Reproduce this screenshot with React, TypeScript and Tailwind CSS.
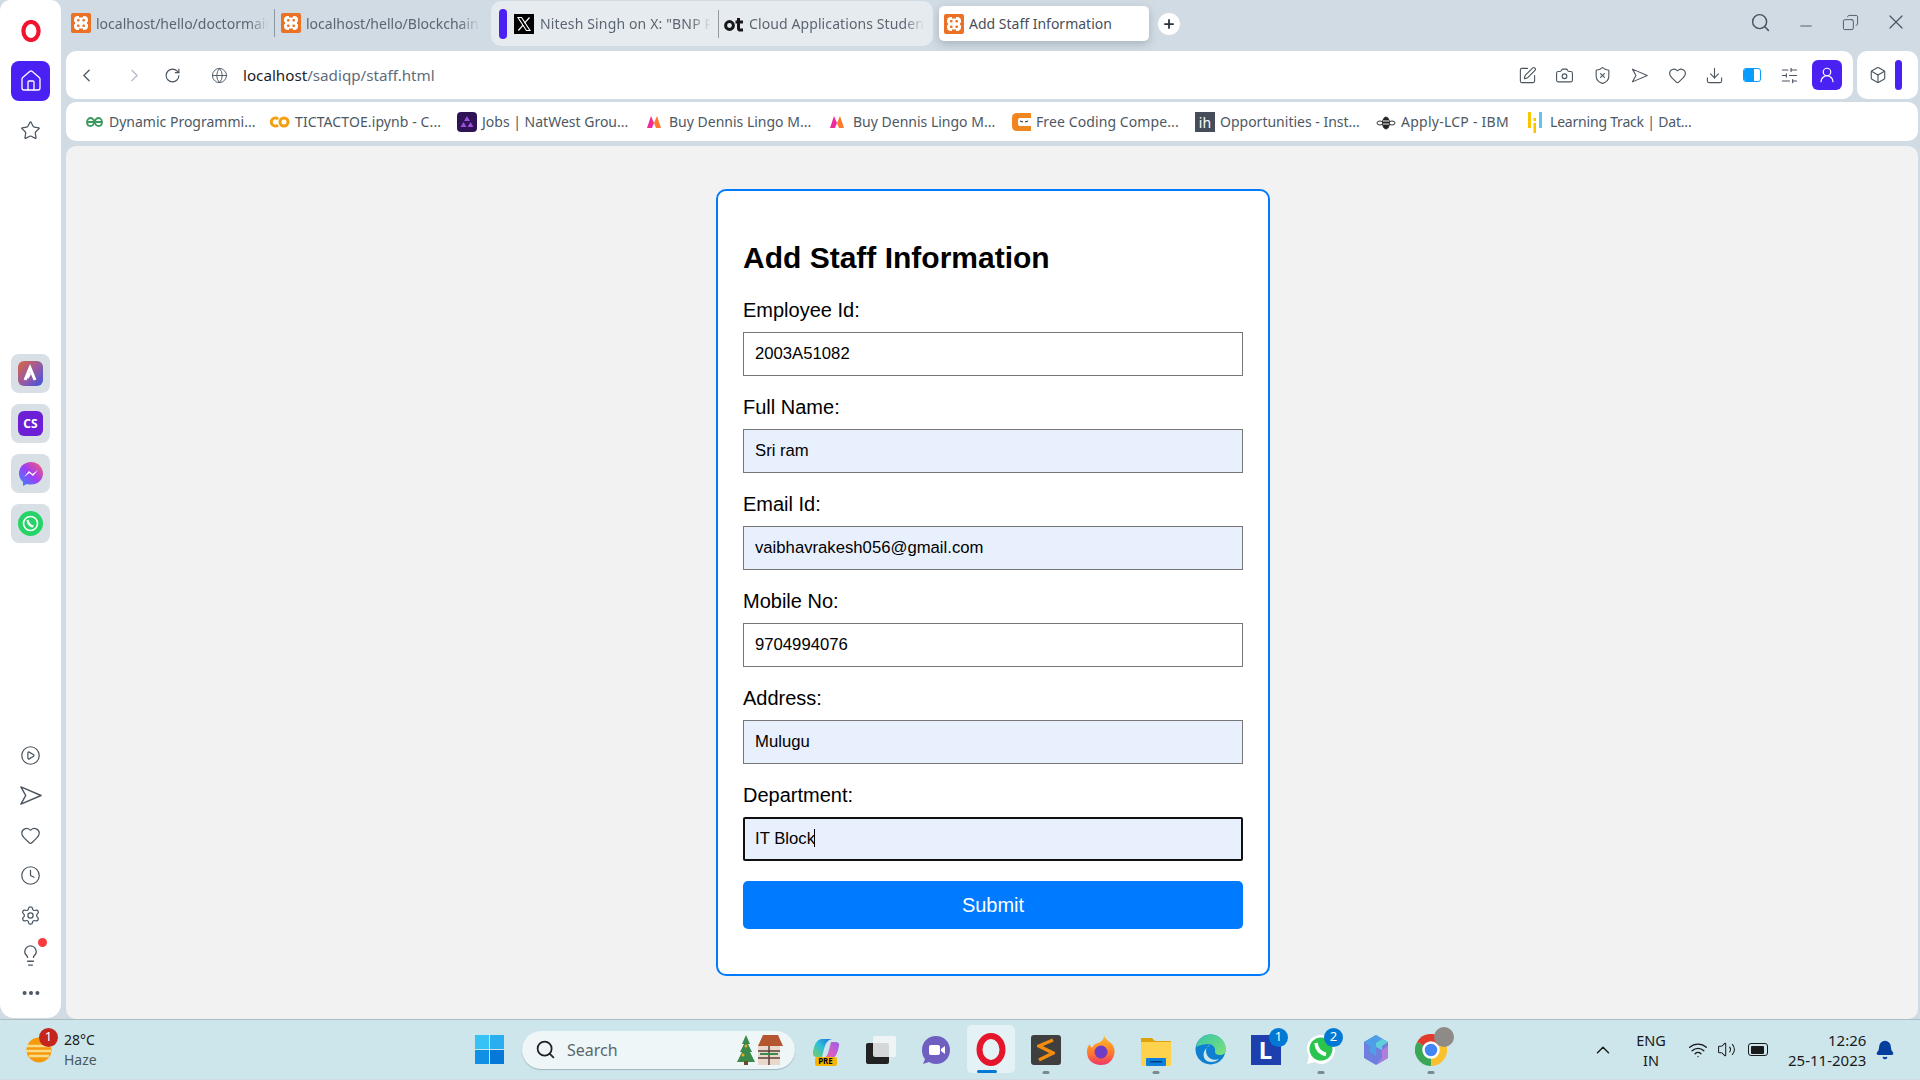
import {
  Bell,
  Box,
  Camera,
  ChevronLeft,
  ChevronRight,
  ChevronUp,
  CirclePlay,
  Clock,
  Copy,
  Download,
  Globe,
  Heart,
  House,
  Lightbulb,
  Minus,
  MoreHorizontal,
  Plus,
  RotateCw,
  Search,
  Settings,
  ShieldX,
  SlidersHorizontal,
  SquarePen,
  Star,
  UserRound,
  Volume2,
  Wifi,
  X,
} from "lucide-react";

function SendIcon({ size = 22 }: { size?: number }) {
  return (
    <svg width={size} height={size} viewBox="0 0 24 24" fill="none" stroke="#4a5560" strokeWidth="1.5" strokeLinejoin="round">
      <path d="M2 3 L23 12 L2 21 L7 12 Z" />
    </svg>
  );
}

function OperaLogo({ size = 20 }: { size?: number }) {
  return (
    <svg width={size} height={size * 1.1} viewBox="0 0 20 22">
      <ellipse cx="10" cy="11" rx="7.6" ry="9" fill="none" stroke="#f0142f" strokeWidth="4.2" />
    </svg>
  );
}

function Xampp() {
  return (
    <svg width="20" height="20" viewBox="0 0 20 20" className="shrink-0">
      <rect width="20" height="20" rx="2" fill="#ea7125" />
      <rect x="3" y="3" width="14" height="14" rx="4" fill="#fff" />
      <rect x="8" y="2.500" width="4" height="2" fill="#ea7125" />
      <rect x="8" y="15.500" width="4" height="2" fill="#ea7125" />
      <rect x="2.500" y="8.800" width="1.500" height="2.400" fill="#ea7125" />
      <rect x="16" y="8.800" width="1.500" height="2.400" fill="#ea7125" />
      <rect x="6" y="6" width="2.600" height="2.600" rx="1" fill="#ea7125" />
      <rect x="11.400" y="6" width="2.600" height="2.600" rx="1" fill="#ea7125" />
      <rect x="6" y="11.400" width="2.600" height="2.600" rx="1" fill="#ea7125" />
      <rect x="11.400" y="11.400" width="2.600" height="2.600" rx="1" fill="#ea7125" />
    </svg>
  );
}

function XLogo() {
  return (
    <svg width="20" height="20" viewBox="0 0 20 20" className="shrink-0">
      <rect width="20" height="20" fill="#000" />
      <path d="M4 3.500h3.600l8.400 13h-3.600z" fill="none" stroke="#fff" strokeWidth="1.100" />
      <path d="M15.500 3.500l-5 5.600M9 11.200l-4.600 5.300" stroke="#fff" strokeWidth="1.200" />
    </svg>
  );
}

function OtLogo() {
  return (
    <svg width="20" height="16" viewBox="0 0 20 16" className="shrink-0">
      <circle cx="5.500" cy="9.500" r="3.900" fill="none" stroke="#15161a" strokeWidth="3" />
      <path d="M14.500 2v10.500q0 1.600 2 1.600H19M11.500 6H19" fill="none" stroke="#15161a" strokeWidth="3" />
    </svg>
  );
}

function TabStrip() {
  return (
    <div className="flex h-[51px] items-start">
      <div className="mt-[8px] ml-[5px] flex h-[30px] items-center">
        <Xampp />
        <span className="ml-[5px] w-[173px] overflow-hidden whitespace-nowrap text-[14px] text-[#5b6671] [mask-image:linear-gradient(to_right,black_88%,transparent)]">
          localhost/hello/doctormain
        </span>
        <div className="ml-[5px] mr-[6px] h-[28px] w-px bg-[#8d98a3]" />
        <Xampp />
        <span className="ml-[5px] w-[174px] overflow-hidden whitespace-nowrap text-[14px] text-[#5b6671] [mask-image:linear-gradient(to_right,black_88%,transparent)]">
          localhost/hello/Blockchain
        </span>
      </div>
      <div className="mt-px ml-[11px] flex h-[45px] w-[442px] shrink-0 items-center rounded-[10px] bg-[#e6ebf0] pl-[8px]">
        <div className="h-[30px] w-[8px] shrink-0 rounded-full bg-[#4b21f3]" />
        <div className="ml-[7px] flex shrink-0 items-center">
          <XLogo />
        </div>
        <span className="ml-[6px] w-[171px] shrink-0 overflow-hidden whitespace-nowrap text-[14px] tracking-[0.15px] text-[#5b6671] [mask-image:linear-gradient(to_right,black_88%,transparent)]">
          Nitesh Singh on X: "BNP Paribas
        </span>
        <div className="ml-[7px] mr-[5px] h-[28px] w-px shrink-0 bg-[#8d98a3]" />
        <OtLogo />
        <span className="ml-[5px] w-[176px] shrink-0 overflow-hidden whitespace-nowrap text-[14px] tracking-[0.1px] text-[#5b6671] [mask-image:linear-gradient(to_right,black_88%,transparent)]">
          Cloud Applications Student
        </span>
      </div>
      <div className="mt-[6px] ml-[6px] flex h-[35px] w-[210px] shrink-0 items-center gap-[5px] rounded-[5px] bg-white pl-[5px] shadow-[0_3px_8px_rgba(90,105,120,0.35)]">
        <Xampp />
        <span className="text-[14px] whitespace-nowrap text-[#46505b]">Add Staff Information</span>
      </div>
      <div className="mt-[13px] ml-[9px] flex h-[22px] w-[22px] shrink-0 items-center justify-center rounded-full bg-white">
        <Plus size={14} strokeWidth={3} color="#25303b" />
      </div>
      <div className="mt-[9px] ml-auto flex items-center text-[#4a5560]">
        <div className="flex w-[45px] justify-center">
          <Search size={21} strokeWidth={1.7} />
        </div>
        <div className="flex w-[45px] justify-center pt-[8px]">
          <Minus size={18} strokeWidth={1.2} />
        </div>
        <div className="flex w-[45px] justify-center">
          <Copy size={17} strokeWidth={1.3} className="-scale-x-100" />
        </div>
        <div className="flex w-[45px] justify-center">
          <X size={24} strokeWidth={1.2} />
        </div>
      </div>
    </div>
  );
}

function AddressBar() {
  const icons = [
    <SquarePen key="pen" size={19} strokeWidth={1.4} />,
    <Camera key="cam" size={19} strokeWidth={1.4} />,
    <ShieldX key="shield" size={19} strokeWidth={1.4} />,
    <SendIcon key="send" size={17} />,
    <Heart key="heart" size={19} strokeWidth={1.4} />,
    <Download key="dl" size={19} strokeWidth={1.4} />,
    <div key="batt" className="flex h-[14px] w-[18px] overflow-hidden rounded-[3px] border border-[#0a9bff]">
      <div className="w-[10px] bg-[#0a9bff]" />
    </div>,
    <SlidersHorizontal key="sl" size={19} strokeWidth={1.4} />,
  ];
  return (
    <div className="flex h-[48px] gap-[4px]">
      <div className="flex w-[1787px] items-center rounded-[10px] bg-white pl-[10px] text-[#4a5560]">
        <ChevronLeft size={21} strokeWidth={1.5} />
        <ChevronRight size={21} strokeWidth={1.5} className="ml-[27px] text-[#b5bdc5]" />
        <RotateCw size={17} strokeWidth={1.6} className="ml-[19px]" />
        <Globe size={17} strokeWidth={1.3} className="ml-[30px]" />
        <span className="ml-[15px] text-[15.2px] whitespace-nowrap">
          <span className="text-[#1d2329]">localhost</span>
          <span className="text-[#5f6c7b]">/sadiqp/staff.html</span>
        </span>
        <div className="ml-auto flex items-center">
          {icons.map((icon, i) => (
            <div key={i} className="flex w-[37.4px] justify-center">
              {icon}
            </div>
          ))}
          <div className="mr-[11px] ml-[4px] flex h-[30px] w-[30px] items-center justify-center rounded-[6px] bg-[#4b21f3]">
            <UserRound size={18} strokeWidth={1.6} color="#fff" />
          </div>
        </div>
      </div>
      <div className="flex w-[61px] items-center rounded-[10px] bg-white pl-[12px] text-[#4a5560]">
        <Box size={18} strokeWidth={1.5} />
        <div className="ml-[8px] h-[30px] w-[7px] rounded-full bg-[#4b21f3]" />
      </div>
    </div>
  );
}

const bookmarks = [
  {
    title: "Dynamic Programmi...",
    width: "w-[145px]",
    icon: (
      <svg width="17" height="12" viewBox="0 0 17 12" fill="none" stroke="#3c9a5f" strokeWidth="1.800">
        <path d="M1 6h15M8.500 6c-1-3-2.500-4-4-4S1 3.500 1 6s1.500 4 3.500 4 3-1 4-4zm0 0c1-3 2.500-4 4-4S16 3.500 16 6s-1.500 4-3.500 4-3-1-4-4z" />
      </svg>
    ),
  },
  {
    title: "TICTACTOE.ipynb - C...",
    width: "w-[147px]",
    icon: (
      <svg width="20" height="12" viewBox="0 0 20 12" fill="none" stroke="#f59e0b" strokeWidth="3">
        <path d="M8 3a4 4 0 1 0 0 6" />
        <circle cx="14" cy="6" r="4" />
      </svg>
    ),
  },
  {
    title: "Jobs | NatWest Grou...",
    width: "w-[146px]",
    icon: (
      <svg width="20" height="20" viewBox="0 0 20 20">
        <rect width="20" height="20" rx="4" fill="#2e1457" />
        <path d="M10 4l3 5H7zM6.500 10l3 5h-6zM13.500 10l3 5h-6z" fill="#9b51d8" />
      </svg>
    ),
  },
  {
    title: "Buy Dennis Lingo M...",
    width: "w-[143px]",
    icon: (
      <svg width="16" height="13" viewBox="0 0 16 13">
        <path d="M1 13L5 1l3 7-2 5z" fill="#ee2a9c" />
        <path d="M8 8l3-7 4 12h-5z" fill="#ff7a2e" />
      </svg>
    ),
  },
  {
    title: "Buy Dennis Lingo M...",
    width: "w-[143px]",
    icon: (
      <svg width="16" height="13" viewBox="0 0 16 13">
        <path d="M1 13L5 1l3 7-2 5z" fill="#ee2a9c" />
        <path d="M8 8l3-7 4 12h-5z" fill="#ff7a2e" />
      </svg>
    ),
  },
  {
    title: "Free Coding Compe...",
    width: "w-[143px]",
    icon: (
      <svg width="20" height="20" viewBox="0 0 20 20">
        <path d="M6 1h14v5H9q-2 0-2 2v4q0 2 2 2h11v5H6q-5 0-5-5V6q0-5 5-5z" fill="#f0861f" />
        <path d="M9 9l3 1M14 10l3-1" stroke="#333" strokeWidth="1.200" />
      </svg>
    ),
  },
  {
    title: "Opportunities - Inst...",
    width: "w-[140px]",
    icon: (
      <div className="flex h-[20px] w-[20px] items-end justify-center bg-[#454c5a] text-[14px] leading-[18px] text-white">ih</div>
    ),
  },
  {
    title: "Apply-LCP - IBM",
    width: "w-[109px]",
    icon: (
      <svg width="20" height="16" viewBox="0 0 20 16" fill="none" stroke="#333" strokeWidth="1">
        <ellipse cx="4" cy="9" rx="3" ry="2" />
        <ellipse cx="16" cy="9" rx="3" ry="2" />
        <ellipse cx="10" cy="9" rx="3.500" ry="6" fill="#222" />
        <path d="M7 7h6M7 10h6" stroke="#fff" />
      </svg>
    ),
  },
  {
    title: "Learning Track | Dat...",
    width: "w-[141px]",
    icon: (
      <svg width="14" height="24" viewBox="0 0 14 24">
        <rect x="0" y="2" width="3" height="16" fill="#fbc400" />
        <rect x="5.500" y="8" width="2.500" height="3" fill="#fbc400" />
        <rect x="5.500" y="13" width="2.500" height="10" fill="#fbc400" />
        <rect x="11" y="2" width="3" height="16" fill="#5fc4ee" />
      </svg>
    ),
  },
];

const bookmarkGaps = ["w-[16px]", "w-[15px]", "w-[18px]", "w-[17px]", "w-[15px]", "w-[16px]", "w-[16px]", "w-[18px]", "w-0"];
const iconBoxes = ["w-[23px]", "w-[25px]", "w-[25px]", "w-[23px]", "w-[24px]", "w-[25px]", "w-[25px]", "w-[25px]", "w-[22px]"];
const bookmarkSpacing = ["", "tracking-[0.1px]", "", "", "", "tracking-[0.1px]", "", "tracking-[0.25px]", "tracking-[-0.2px]"];

function BookmarkBar() {
  return (
    <div className="mt-[3px] flex h-[39px] items-center rounded-[10px] bg-white pl-[20px]">
      {bookmarks.map((b, i) => (
        <div key={i} className="flex items-center">
          <div className={`flex items-center ${iconBoxes[i]}`}>{b.icon}</div>
          <span className={`${b.width} text-[14px] whitespace-nowrap text-[#4d5863] ${bookmarkSpacing[i]}`}>{b.title}</span>
          <div className={bookmarkGaps[i]} />
        </div>
      ))}
    </div>
  );
}

function Tile({ children }: { children: React.ReactNode }) {
  return <div className="flex h-[39px] w-[39px] items-center justify-center rounded-[8px] bg-[#d8e0e6]">{children}</div>;
}

function Sidebar() {
  return (
    <aside className="flex h-[1018px] w-[61px] shrink-0 flex-col items-center rounded-b-[14px] rounded-t-[10px] bg-white pt-[20px] text-[#4a5560]">
      <OperaLogo />
      <div className="mt-[19px] flex h-[40px] w-[39px] items-center justify-center rounded-[8px] bg-[#4b21f3]">
        <House size={24} strokeWidth={1.3} color="#fff" />
      </div>
      <Star size={21} strokeWidth={1.4} className="mt-[19px]" />
      <div className="mt-[213px] flex flex-col gap-[11px]">
        <Tile>
          <svg width="25" height="25" viewBox="0 0 25 25">
            <defs>
              <linearGradient id="arc" x1="0" y1="0" x2="1" y2="1">
                <stop offset="0" stopColor="#d9663d" />
                <stop offset="0.5" stopColor="#9b5a9f" />
                <stop offset="1" stopColor="#3c55e0" />
              </linearGradient>
            </defs>
            <rect width="25" height="25" rx="6" fill="url(#arc)" />
            <path d="M7 19l5-12 5 12M12 12l-3 5" fill="none" stroke="#fff" strokeWidth="3" />
          </svg>
        </Tile>
        <Tile>
          <div className="flex h-[25px] w-[25px] items-center justify-center rounded-[6px] bg-[#6d1fd6] text-[12px] font-bold text-white">CS</div>
        </Tile>
        <Tile>
          <svg width="26" height="26" viewBox="0 0 26 26">
            <defs>
              <linearGradient id="msg" x1="0" y1="1" x2="1" y2="0">
                <stop offset="0" stopColor="#2f8cff" />
                <stop offset="0.5" stopColor="#a03df5" />
                <stop offset="1" stopColor="#ff5f6a" />
              </linearGradient>
            </defs>
            <path d="M13 1C6 1 1 6 1 12.500c0 3.500 1.500 6.500 4 8.500v4l3.800-2c1.300.4 2.700.6 4.200.6 7 0 12-5 12-11.100S20 1 13 1z" fill="url(#msg)" />
            <path d="M6 16l5-6 3.500 3L20 9l-5 6-3.500-3z" fill="#fff" />
          </svg>
        </Tile>
        <Tile>
          <svg width="25" height="25" viewBox="0 0 25 25">
            <circle cx="12.500" cy="12.500" r="12.500" fill="#25d366" />
            <circle cx="12.500" cy="12.500" r="7" fill="none" stroke="#fff" strokeWidth="1.600" />
            <path d="M9.500 9c.5 3.500 2.500 6 6 6.500" fill="none" stroke="#fff" strokeWidth="2.200" />
          </svg>
        </Tile>
      </div>
      <div className="mt-[192px] flex flex-col items-center">
        <div className="flex h-[40px] items-center">
          <CirclePlay size={21} strokeWidth={1.4} />
        </div>
        <div className="flex h-[40px] items-center">
          <SendIcon size={23} />
        </div>
        <div className="flex h-[40px] items-center">
          <Heart size={21} strokeWidth={1.4} />
        </div>
        <div className="flex h-[40px] items-center">
          <Clock size={21} strokeWidth={1.4} />
        </div>
        <div className="flex h-[40px] items-center">
          <Settings size={21} strokeWidth={1.4} />
        </div>
        <div className="relative flex h-[40px] items-center">
          <Lightbulb size={23} strokeWidth={1.4} />
          <div className="absolute top-[3px] -right-[5px] h-[9px] w-[9px] rounded-full bg-[#f53b3b]" />
        </div>
        <div className="flex h-[36px] items-center">
          <MoreHorizontal size={22} strokeWidth={2.4} />
        </div>
      </div>
    </aside>
  );
}

const fields = [
  { label: "Employee Id:", value: "2003A51082", filled: false },
  { label: "Full Name:", value: "Sri ram", filled: true },
  { label: "Email Id:", value: "vaibhavrakesh056@gmail.com", filled: true },
  { label: "Mobile No:", value: "9704994076", filled: false },
  { label: "Address:", value: "Mulugu", filled: true },
];

function StaffForm() {
  return (
    <div className="h-[787px] w-[554px] rounded-[10px] border-2 border-[#007bff] bg-white px-[25px] pt-[48px] font-['Liberation_Sans',Arial,sans-serif] text-black">
      <h2 className="mb-[23px] text-[30px] leading-[37px] font-bold">Add Staff Information</h2>
      {fields.map((f) => (
        <div key={f.label} className="mb-[20px]">
          <label className="mb-[10px] block text-[20px] leading-[23px]">{f.label}</label>
          <input
            readOnly
            value={f.value}
            className={`block h-[44px] w-[500px] border border-[#767676] px-[11px] text-[16.7px] text-black outline-none ${f.filled ? "bg-[#e8f0fe]" : "bg-white"}`}
          />
        </div>
      ))}
      <div className="mb-[20px]">
        <label className="mb-[10px] block text-[20px] leading-[23px]">Department:</label>
        <div className="relative">
          <input
            readOnly
            value="IT Block"
            className="block h-[44px] w-[500px] rounded-[2px] border-2 border-[#101010] bg-[#e8f0fe] px-[10px] text-[16.7px] text-black outline-none"
          />
          <div className="absolute top-[12px] left-[71px] h-[18px] w-px bg-black" />
        </div>
      </div>
      <button className="h-[48px] w-[500px] rounded-[5px] bg-[#007bff] text-[20px] text-white">Submit</button>
    </div>
  );
}

function Dot() {
  return <div className="absolute bottom-[6px] left-1/2 h-[3px] w-[7px] -translate-x-1/2 rounded-full bg-[#7b8a92]" />;
}

function Slot({ children, dot }: { children: React.ReactNode; dot?: boolean }) {
  return (
    <div className="relative flex h-[60px] w-[55px] items-center justify-center">
      {children}
      {dot && <Dot />}
    </div>
  );
}

function Badge({ n }: { n: number }) {
  return (
    <div className="absolute top-[8px] right-[5px] flex h-[19px] w-[19px] items-center justify-center rounded-full bg-[#0078d4] text-[13px] text-white">{n}</div>
  );
}

function Taskbar() {
  return (
    <footer className="flex h-[60px] items-center border-t border-[#aebcc4] bg-[#cde6ec]">
      <div className="flex w-[475px] items-center pl-[25px]">
        <div className="relative h-[26px] w-[28px]">
          <svg width="28" height="26" viewBox="0 0 28 26">
            <circle cx="14" cy="13" r="12.500" fill="#f59a0b" />
            <path d="M2 9h24M0 14h26M4 19h20" stroke="#f8dc8a" strokeWidth="2.400" />
          </svg>
          <div className="absolute -top-[9px] left-[14px] flex h-[19px] w-[19px] items-center justify-center rounded-full bg-[#c4261d] text-[13px] text-white">1</div>
        </div>
        <div className="ml-[11px] flex flex-col text-[14px] leading-[20px]">
          <span className="text-[#1a1a1a]">28°C</span>
          <span className="text-[#4b5960]">Haze</span>
        </div>
      </div>
      <div className="grid h-[29px] w-[29px] grid-cols-2 gap-[1px]">
        <div className="bg-[#36c2f5]" />
        <div className="bg-[#2aaef0]" />
        <div className="bg-[#0f8fe6]" />
        <div className="bg-[#0679d8]" />
      </div>
      <div className="ml-[18px] flex h-[38px] w-[273px] items-center rounded-full bg-[#eef6f8] pl-[13px] shadow-[0_1px_1px_rgba(90,110,120,0.4)]">
        <Search size={21} strokeWidth={2} color="#1c2226" />
        <span className="ml-[11px] text-[16px] text-[#5c676d]">Search</span>
        <div className="ml-auto flex items-end pr-[12px]">
          <svg width="18" height="31" viewBox="0 0 18 31">
            <path d="M9 1l4 9h-2l4 8h-2l5 10H0l5-10H3l4-8H5z" fill="#3a8a4c" />
            <rect x="7" y="27" width="4" height="4" fill="#6b4a2b" />
            <circle cx="9" cy="12" r="1.500" fill="#f2a81d" />
            <circle cx="6" cy="21" r="1.500" fill="#f2a81d" />
          </svg>
          <svg width="28" height="31" viewBox="0 0 28 31">
            <rect x="3" y="10" width="22" height="21" fill="#e9d8cb" />
            <path d="M3 12L8 1h15l5 11z" fill="#b5552f" />
            <path d="M3 17h22M3 24h22M14 12v19" stroke="#5f4237" strokeWidth="1.500" />
            <path d="M5 20h18" stroke="#3a8a4c" strokeWidth="2" />
          </svg>
        </div>
      </div>
      <div className="ml-[3px] flex">
        <Slot>
          <div className="relative h-[30px] w-[30px]">
            <svg width="30" height="26" viewBox="0 0 30 26">
              <defs>
                <linearGradient id="cpl" x1="1" y1="0" x2="0" y2="1">
                  <stop offset="0" stopColor="#1b6fe0" />
                  <stop offset="0.5" stopColor="#2fc0d8" />
                  <stop offset="1" stopColor="#7ecb5a" />
                </linearGradient>
                <linearGradient id="cpr" x1="1" y1="0" x2="0" y2="1">
                  <stop offset="0" stopColor="#9b5fe8" />
                  <stop offset="0.6" stopColor="#d65fc8" />
                  <stop offset="1" stopColor="#f08a5a" />
                </linearGradient>
              </defs>
              <path d="M2 17Q4 5 10 4h11q-6 1-8 10l-2 8H6q-5 0-4-5z" fill="url(#cpl)" />
              <path d="M28 11q-2 12-8 13H11q5-1 7-9l2-8h4q5 0 4 4z" fill="url(#cpr)" />
            </svg>
            <div className="absolute -bottom-px left-[4px] flex h-[9px] w-[22px] items-center justify-center rounded-[2px] bg-[#f7b500] text-[8px] leading-none font-bold text-black">PRE</div>
          </div>
        </Slot>
        <Slot>
          <div className="relative h-[28px] w-[30px]">
            <div className="absolute bottom-0 left-0 h-[21px] w-[23px] rounded-[2px] bg-[#222]" />
            <div className="absolute top-0 right-0 h-[21px] w-[23px] rounded-[2px] bg-[#f4f7f8]/85" />
          </div>
        </Slot>
        <Slot>
          <svg width="30" height="30" viewBox="0 0 30 30">
            <path d="M15 1C7 1 1 7 1 15c0 4 1 7 3 9l-2 5 6-2c2 1 4 2 7 2 8 0 14-6 14-14S23 1 15 1z" fill="#6f5fc0" />
            <rect x="8" y="10" width="11" height="10" rx="2" fill="#fff" />
            <path d="M20 14l4-3v8l-4-3z" fill="#fff" />
          </svg>
        </Slot>
        <div className="relative flex h-[60px] w-[55px] items-center justify-center">
          <div className="absolute top-[5px] left-[4px] h-[48px] w-[48px] rounded-[5px] bg-[#e4f1f5]" />
          <div className="relative">
            <svg width="30" height="33" viewBox="0 0 30 33">
              <ellipse cx="15" cy="16.500" rx="11.500" ry="13.500" fill="none" stroke="#e5162c" strokeWidth="6" />
            </svg>
          </div>
          <div className="absolute bottom-[7px] left-[14px] h-[3px] w-[20px] rounded-full bg-[#0078d4]" />
        </div>
        <Slot dot>
          <div className="flex h-[30px] w-[30px] items-center justify-center rounded-[3px] bg-[#3f3f3f]">
            <svg width="18" height="24" viewBox="0 0 18 24" fill="none" stroke="#f28c0f" strokeWidth="3.400">
              <path d="M16 2L2 8l14 7L2 22" />
            </svg>
          </div>
        </Slot>
        <Slot>
          <svg width="30" height="32" viewBox="0 0 30 32">
            <defs>
              <linearGradient id="ff" x1="0" y1="0" x2="0" y2="1">
                <stop offset="0" stopColor="#ffbd2e" />
                <stop offset="0.6" stopColor="#ff7a2b" />
                <stop offset="1" stopColor="#f0346b" />
              </linearGradient>
            </defs>
            <path d="M18 1c1 4 5 6 8 9 3 4 3 8 2 11-2 7-7 10-13 10C7 31 1 26 1 18c0-4 1-6 3-8 0 2 1 3 2 4 1-3 3-4 6-5 3-1 6-3 6-8z" fill="url(#ff)" />
            <circle cx="15" cy="18" r="6.500" fill="#6f3cc4" />
          </svg>
        </Slot>
        <Slot dot>
          <svg width="30" height="32" viewBox="0 0 30 32">
            <path d="M0 4h11l3 3h16v5H0z" fill="#dfa30a" />
            <rect y="8" width="30" height="24" fill="#ffd24d" />
            <rect x="5" y="24" width="20" height="8" rx="1" fill="#0a80dc" />
            <rect x="9" y="27" width="12" height="1.500" fill="#003f80" />
          </svg>
        </Slot>
        <Slot>
          <svg width="31" height="31" viewBox="0 0 31 31">
            <defs>
              <linearGradient id="edge" x1="0" y1="0" x2="1" y2="1">
                <stop offset="0" stopColor="#37c6a6" />
                <stop offset="1" stopColor="#7fe07a" />
              </linearGradient>
            </defs>
            <circle cx="15.500" cy="15.500" r="15" fill="#0f7fd1" />
            <path d="M1 13C3 5 9 .5 15.500.5 24 .5 31 7 31 15.500c0 3-2 5.500-6 5.500-3 0-5-1-5-3 1-4-2-8-6.500-8C9 10 5 11 1 13z" fill="url(#edge)" />
            <path d="M15 11c-4 1-5 6-3 10s7 6 12 4c-3 3-8 4-12 2-5-3-5-11 3-16z" fill="#cfe6ec" />
          </svg>
        </Slot>
        <Slot>
          <div className="flex h-[30px] w-[30px] items-center justify-center bg-[#1e3fae] text-[24px] leading-none font-bold text-white">L</div>
          <Badge n={1} />
        </Slot>
        <Slot dot>
          <svg width="30" height="31" viewBox="0 0 30 31">
            <path d="M15 1C7 1 1 7 1 15c0 3 1 5 2 7l-2 8 8-2c2 1 4 2 6 2 8 0 14-7 14-15S23 1 15 1z" fill="#fff" />
            <circle cx="15" cy="15" r="11.500" fill="#2bc44f" />
            <path d="M10 9c.5 6 4 10 10 11.500" fill="none" stroke="#fff" strokeWidth="3.500" />
          </svg>
          <Badge n={2} />
        </Slot>
        <Slot>
          <svg width="28" height="32" viewBox="0 0 28 32">
            <path d="M14 1l12 7v16l-12 7-12-7V8z" fill="#6f7fe0" />
            <path d="M14 31l12-7V12l-6 4v8z" fill="#b07fdc" />
            <path d="M2 8l12-7 6 4-6 4v13l-6-4V12z" fill="#4f9fe8" />
            <path d="M14 9l6-4 6 3-6 4v4l-6-3z" fill="#5ed0d8" />
          </svg>
        </Slot>
        <Slot dot>
          <div className="relative h-[32px] w-[32px]">
            <svg width="32" height="32" viewBox="0 0 32 32">
              <path d="M16 16L2.100 8A16 16 0 0 1 29.900 8z" fill="#e33b2e" />
              <path d="M16 16L29.900 8A16 16 0 0 1 16 32z" fill="#fbc02d" />
              <path d="M16 16L16 32A16 16 0 0 1 2.100 8z" fill="#3aa757" />
              <circle cx="16" cy="16" r="7.500" fill="#4285f4" stroke="#fff" strokeWidth="2.500" />
            </svg>
            <div className="absolute -top-[7px] -right-[7px] h-[20px] w-[20px] rounded-full bg-[#8d8a88]" />
          </div>
        </Slot>
      </div>
      <div className="ml-[134px] flex items-center text-[#1a1a1a]">
        <ChevronUp size={22} strokeWidth={1.6} />
        <div className="ml-[15px] w-[44px] text-center text-[14.500px] leading-[20px]">
          <div>ENG</div>
          <div>IN</div>
        </div>
        <Wifi size={20} strokeWidth={1.6} className="ml-[15px]" />
        <Volume2 size={19} strokeWidth={1.3} className="ml-[9px]" />
        <div className="ml-[12px] flex h-[13px] w-[20px] rounded-[3px] border border-[#1a1a1a] p-[1.5px]">
          <div className="w-[13px] rounded-[1px] bg-[#1a1a1a]" />
        </div>
        <div className="ml-[20px] text-right text-[15px] leading-[20px]">
          <div>12:26</div>
          <div>25-11-2023</div>
        </div>
        <Bell size={20} fill="#053e9c" color="#053e9c" className="ml-[9px]" />
      </div>
    </footer>
  );
}

export default function App() {
  return (
    <div className="flex h-[1080px] w-[1920px] flex-col overflow-hidden bg-[#d1dbe4] font-['Noto_Sans',sans-serif]">
      <div className="flex h-[1019px] gap-[5px]">
        <Sidebar />
        <div className="flex min-w-0 flex-1 flex-col pr-[2px]">
          <TabStrip />
          <AddressBar />
          <BookmarkBar />
          <main className="mt-[5px] flex min-h-0 flex-1 justify-center rounded-t-[10px] rounded-b-[10px] bg-[#f2f2f2] pt-[43px] pl-[2px]">
            <StaffForm />
          </main>
        </div>
      </div>
      <Taskbar />
    </div>
  );
}
